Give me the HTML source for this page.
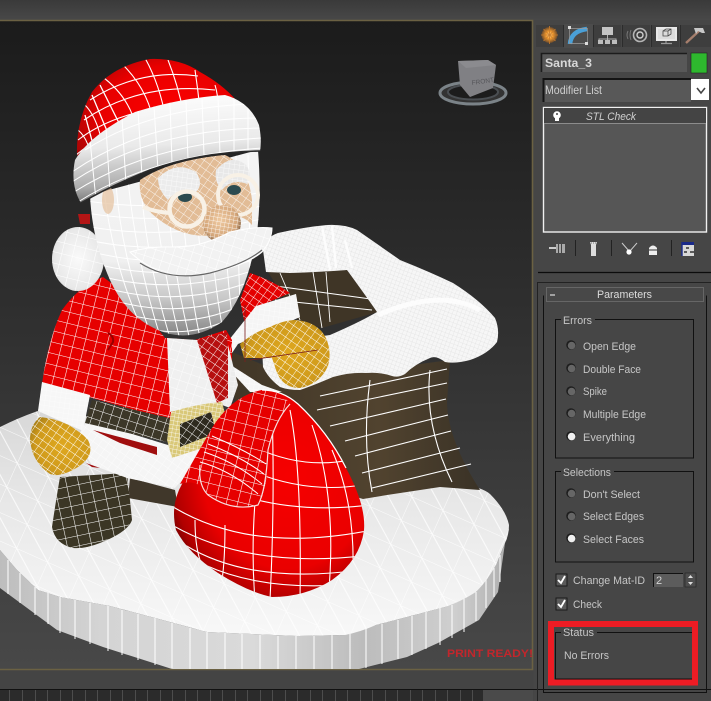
<!DOCTYPE html>
<html><head><meta charset="utf-8"><title>STL Check</title>
<style>
html,body{margin:0;padding:0;background:#444;width:711px;height:701px;overflow:hidden}
svg{display:block}
text{font-family:"Liberation Sans",sans-serif;font-size:11px;fill:#c6c6c6}
</style></head><body>
<svg width="711" height="701" viewBox="0 0 711 701" xmlns="http://www.w3.org/2000/svg">
<defs>
<linearGradient id="vp" x1="0" y1="0" x2="0" y2="1"><stop offset="0" stop-color="#1b1b1b"/><stop offset=".45" stop-color="#2f2f2f"/><stop offset="1" stop-color="#484848"/></linearGradient>
<linearGradient id="top" x1="0" y1="0" x2="0" y2="1"><stop offset="0" stop-color="#3a3a3a"/><stop offset="1" stop-color="#484848"/></linearGradient>
<linearGradient id="side" x1="0" y1="0" x2="1" y2="0"><stop offset="0" stop-color="#bdbdbd"/><stop offset=".2" stop-color="#d4d4d4"/><stop offset=".5" stop-color="#dadada"/><stop offset=".72" stop-color="#bcbcbc"/><stop offset=".9" stop-color="#cfcfcf"/><stop offset="1" stop-color="#b0b0b0"/></linearGradient>
<linearGradient id="brim" x1="0" y1="0" x2=".1" y2="1"><stop offset="0" stop-color="#ffffff"/><stop offset=".5" stop-color="#eaeaea"/><stop offset=".85" stop-color="#adadad"/><stop offset="1" stop-color="#777"/></linearGradient>
<radialGradient id="hat" cx=".6" cy=".5" r=".75"><stop offset="0" stop-color="#ff0000"/><stop offset=".6" stop-color="#e80000"/><stop offset="1" stop-color="#8a0808"/></radialGradient>
<radialGradient id="bag" cx=".6" cy=".42" r=".68"><stop offset="0" stop-color="#f60000"/><stop offset=".65" stop-color="#ea0000"/><stop offset=".88" stop-color="#b00000"/><stop offset="1" stop-color="#600000"/></radialGradient>
<linearGradient id="head" x1="0" y1="0" x2="0" y2="1"><stop offset="0" stop-color="#f4f4f4"/><stop offset=".6" stop-color="#f0f0f0"/><stop offset=".8" stop-color="#c8c8c8"/><stop offset="1" stop-color="#858585"/></linearGradient>
<radialGradient id="gold" cx=".55" cy=".5" r=".65"><stop offset="0" stop-color="#dfa81e"/><stop offset=".7" stop-color="#cf9a1c"/><stop offset="1" stop-color="#a07a18"/></radialGradient>
<radialGradient id="pom" cx=".5" cy=".5" r=".62"><stop offset="0" stop-color="#fafafa"/><stop offset=".75" stop-color="#e8e8e8"/><stop offset="1" stop-color="#c4c4c4"/></radialGradient>
<radialGradient id="nose" cx=".45" cy=".4" r=".6"><stop offset="0" stop-color="#efc9a0"/><stop offset=".75" stop-color="#d4a67a"/><stop offset="1" stop-color="#7d5c3e"/></radialGradient>
<linearGradient id="brown" x1="0" y1="0" x2="1" y2="0"><stop offset="0" stop-color="#403627"/><stop offset=".6" stop-color="#51432f"/><stop offset="1" stop-color="#3a3226"/></linearGradient>
<linearGradient id="snow" x1="0" y1="0" x2="0" y2="1"><stop offset="0" stop-color="#d6d6d6"/><stop offset=".45" stop-color="#e8e8e8"/><stop offset="1" stop-color="#f8f8f8"/></linearGradient>
<radialGradient id="sun" cx=".5" cy=".5" r=".5"><stop offset="0" stop-color="#ffe0a0"/><stop offset=".45" stop-color="#f29a2e"/><stop offset="1" stop-color="#6b4a2c"/></radialGradient>
<pattern id="g11" width="11" height="11" patternUnits="userSpaceOnUse" patternTransform="rotate(14)"><path d="M0 0H11M0 0V11" stroke="#fff" stroke-width="1.1" fill="none"/></pattern>
<pattern id="g11b" width="12" height="10" patternUnits="userSpaceOnUse" patternTransform="rotate(-12)"><path d="M0 0H12M0 0V10" stroke="#fff" stroke-width="1.1" fill="none"/></pattern>
<pattern id="g9" width="9" height="9" patternUnits="userSpaceOnUse" patternTransform="rotate(18)"><path d="M0 0H9M0 0V9" stroke="#fff" stroke-width="1" fill="none"/></pattern>
<pattern id="g7" width="7" height="7" patternUnits="userSpaceOnUse" patternTransform="rotate(35)"><path d="M0 0H7M0 0V7" stroke="#fff" stroke-width=".9" fill="none"/></pattern>
<pattern id="g4" width="4" height="4" patternUnits="userSpaceOnUse" patternTransform="rotate(20)"><path d="M0 0H4M0 0V4" stroke="#cfcfcf" stroke-width=".5" fill="none"/></pattern>
<pattern id="g5" width="5" height="5" patternUnits="userSpaceOnUse" patternTransform="rotate(8)"><path d="M0 0H5M0 0V5" stroke="#fff" stroke-width=".9" fill="none"/></pattern>
<pattern id="g5y" width="4" height="4" patternUnits="userSpaceOnUse" patternTransform="rotate(10)"><path d="M0 0H4M0 0V4" stroke="#fff" stroke-width=".7" fill="none"/></pattern>
<pattern id="snowm" width="34" height="26" patternUnits="userSpaceOnUse" patternTransform="rotate(24)"><path d="M0 0H34M0 0V26M0 0L34 26" stroke="#fff" stroke-width="1" fill="none"/></pattern>
<clipPath id="cBag"><path id="bagP" d="M262,390 Q282,390 298,404 Q328,432 346,468 Q366,505 364,530 Q360,560 332,580 Q305,597 272,597 Q248,592 218,573 Q188,553 176,530 Q170,505 182,484 Q198,456 212,428 Q232,396 262,390Z"/></clipPath>
<clipPath id="cHead"><path d="M90,195 L258,150 Q262,200 256,240 Q246,296 222,322 Q190,344 158,330 Q126,316 110,280 Q92,240 90,195Z"/></clipPath>
<clipPath id="cHat"><path d="M150,59 Q180,58 200,72 Q222,84 236,100 L200,130 L100,180 L77,155 Q76,120 92,92 Q112,66 150,59Z"/></clipPath>
<clipPath id="cBrim"><path d="M75,160 Q90,135 135,112 Q180,98 225,95 Q250,102 259,125 Q262,140 260,151 Q200,152 150,170 Q110,186 81,203 Q70,185 75,160Z"/></clipPath>
<clipPath id="cPom"><ellipse cx="78" cy="259" rx="26" ry="32"/></clipPath>
</defs>

<!-- chrome -->
<rect width="711" height="701" fill="#444"/>
<rect width="711" height="20" fill="url(#top)"/>
<rect x="0" y="20" width="532" height="650" fill="url(#vp)"/>
<path d="M0,20.5H532.5V669.5H0" fill="none" stroke="#6b6143" stroke-width="1.6"/>
<rect x="533.5" y="20" width="178" height="681" fill="#464646"/>

<!-- base side -->
<path d="M0,550 L17,570 L38,590 L60,597 L110,606 L207,632 L297,636 L345,635 L376,625 L445,607 L476,592 L497,563 L505,543 L498,592 L479,620 L438,643 L407,657 L359,669 L172,669 L103,647 L57,630 L0,588Z" fill="url(#side)"/>
<path d="M8,560V594M20,573V603M35,587V615M48,593V624M60,597V633M75,600V639M90,603V644M108,606V651M122,610V655M138,614V660M155,618V665M172,623V668M190,628V669M207,632V669M225,633V669M242,634V669M260,635V669M278,636V669M296,636V669M314,636V669M332,635V669M350,634V669M366,628V668M382,624V664M398,620V659M412,616V655M426,612V649M440,608V645M452,605V638M464,598V632M476,592V621M486,579V608M494,568V597M500,555V582" stroke="#fff" stroke-width="1"/>
<!-- snow top -->
<path d="M0,427 Q18,418 35,412 L70,400 L140,470 L360,490 Q420,484 465,487 Q480,486 490,494 Q506,510 509,525 Q509,535 505,543 Q500,555 497,563 Q488,580 476,592 Q460,602 445,607 L376,625 Q360,632 345,635 L297,636 L207,632 Q155,618 110,606 L60,597 L38,590 L17,570 L0,550Z" fill="url(#snow)"/>
<path d="M0,427 Q18,418 35,412 L70,400 L140,470 L360,490 Q420,484 465,487 Q480,486 490,494 Q506,510 509,525 Q509,535 505,543 Q500,555 497,563 Q488,580 476,592 Q460,602 445,607 L376,625 Q360,632 345,635 L297,636 L207,632 Q155,618 110,606 L60,597 L38,590 L17,570 L0,550Z" fill="url(#snowm)" opacity=".85"/>

<!-- chimney -->
<path d="M227,350 L300,380 L450,360 L447,403 Q448,440 480,490 L440,487 L387,495 L363,499 L300,480 L240,430Z" fill="url(#brown)"/>
<path d="M317,410L447,383M330,426L446,399M345,441L448,415M355,456L451,431M362,473L460,448M372,488L471,464M320,396L447,369M370,380Q362,440 372,492M430,370Q424,425 452,482" stroke="#fff" stroke-width="1.1" fill="none"/>
<path d="M130,478L175,490L178,507L128,498Z" fill="#40372a"/>
<path d="M268,272 L347,270 L378,312 L322,328 L298,320Z" fill="#3f3526"/>
<path d="M280,273L300,320M313,272L322,328M326,272L330,322M268,285L378,300M275,300L372,310" stroke="#fff" stroke-width=".9" fill="none"/>
<!-- rim -->
<path d="M263,250 Q264,238 278,233 Q305,227 327,225 Q345,224 357,230 Q380,246 400,260 Q430,272 453,283 Q480,300 495,318 Q500,330 497,342 Q488,354 470,360 Q455,364 445,362 Q436,355 430,358 Q415,364 405,374 Q398,378 392,376 Q380,372 367,373 Q350,372 333,377 Q312,386 300,390 Q288,390 280,387 Q268,378 263,367 L262,345 L330,335 Q360,322 377,312 Q366,296 347,270 Q320,272 290,273 L266,272Z" fill="#f6f6f6"/>
<path d="M263,250 Q264,238 278,233 Q305,227 327,225 Q345,224 357,230 Q380,246 400,260 Q430,272 453,283 Q480,300 495,318 Q500,330 497,342 Q488,354 470,360 Q455,364 445,362 Q436,355 430,358 Q415,364 405,374 Q398,378 392,376 Q380,372 367,373 Q350,372 333,377 Q312,386 300,390 Q288,390 280,387 Q268,378 263,367 L262,345 L330,335 Q360,322 377,312 Q366,296 347,270 Q320,272 290,273 L266,272Z" fill="url(#g4)" opacity=".75"/>
<path d="M322,226L330,270M332,226L336,268M345,240L352,268" stroke="#fff" stroke-width="2.4" fill="none" opacity=".8"/>
<path d="M378,315Q440,288 480,310" stroke="#fff" stroke-width="5" fill="none" opacity=".8"/>

<!-- right arm behind -->
<path d="M250,273 Q272,280 290,293 L257,307 L245,325 L240,300Z" fill="#e40000"/>
<path d="M250,273 Q272,280 290,293 L257,307 L245,325 L240,300Z" fill="url(#g7)"/>
<path d="M256,306 L296,294 L300,317 L262,334 L238,344 L226,362 L262,385 L282,392 L250,392 L228,368 L225,345Z" fill="#f5f5f5"/>
<path d="M256,306 L296,294 L300,317 L262,334 L238,344 L226,362 L262,385 L282,392 L250,392 L228,368 L225,345Z" fill="url(#g5)" opacity=".6"/>

<!-- boot -->
<path d="M60,477 L127,473 Q130,500 132,520 Q128,532 100,543 Q85,549 73,548 Q55,544 52,527 Q56,500 60,477Z" fill="#3b3625"/>
<path d="M60,477 L127,473 Q130,500 132,520 Q128,532 100,543 Q85,549 73,548 Q55,544 52,527 Q56,500 60,477Z" fill="url(#g11b)"/>

<!-- torso -->
<path d="M42,384 Q48,340 62,310 Q80,285 103,277 L135,300 L165,338 L195,340 L226,330 L232,340 L232,380 L227,400 L170,420 L92,398Z" fill="#e60000"/>
<path d="M42,384 Q48,340 62,310 Q80,285 103,277 L135,300 L165,338 L195,340 L226,330 L232,340 L232,380 L227,400 L170,420 L92,398Z" fill="url(#g11)"/>
<path d="M197,340 L227,332 L230,400 L217,403Z" fill="#b60f0f"/>
<path d="M197,340 L227,332 L230,400 L217,403Z" fill="url(#g7)"/>
<path d="M108,333 Q114,336 113,342 L108,350" fill="none" stroke="#900" stroke-width="2"/>
<!-- white placket -->
<path d="M167,338 L197,340 L217,403 L170,412Z" fill="#f0f0f0"/>
<path d="M167,338 L197,340 L217,403 L170,412Z" fill="url(#g9)" opacity=".8"/>
<path d="M228,345 L238,385 L230,408 L217,403 L228,398Z" fill="#ececec"/>
<path d="M228,345 L238,385 L230,408 L217,403 L228,398Z" fill="url(#g5)" opacity=".5"/>
<!-- lower fur -->
<path d="M87,420 L168,445 L225,425 L232,432 L200,460 L175,488 L127,478 L92,465 L76,440Z" fill="#f5f5f5"/>
<path d="M87,420 L168,445 L225,425 L232,432 L200,460 L175,488 L127,478 L92,465 L76,440Z" fill="url(#g7)" opacity=".7"/>
<path d="M93,430 L157,447 L157,455 L120,443 Z" fill="#a00f0f"/>
<path d="M86,463 L100,468 L92,467Z" fill="#a00f0f"/>
<!-- belt -->
<path d="M92,400 L170,418 L167,442 L85,423Z" fill="#3c3728"/>
<path d="M92,400 L170,418 L167,442 L85,423Z" fill="url(#g9)"/>
<!-- buckle -->
<path d="M171,412 Q196,404 222,402 L226,418 L218,444 Q195,450 172,458 L167,440Z" fill="#d9c878"/>
<path d="M171,412 Q196,404 222,402 L226,418 L218,444 Q195,450 172,458 L167,440Z" fill="url(#g5y)"/>
<path d="M180,424 L211,412 L216,433 L180,447Z" fill="#2e2a1e"/>
<path d="M180,424 L211,412 L216,433 L180,447Z" fill="url(#g7)"/>
<!-- cuff left -->
<path d="M42,382 L90,395 L83,431 L38,411Z" fill="#f7f7f7"/>
<path d="M42,382 L90,395 L83,431 L38,411Z" fill="url(#g5)" opacity=".5"/>
<!-- left mitten -->
<path d="M40,417 Q70,420 88,440 Q96,455 78,467 Q60,478 50,474 Q32,462 30,440 Q30,425 40,417Z" fill="url(#gold)"/>
<path d="M40,417 Q70,420 88,440 Q96,455 78,467 Q60,478 50,474 Q32,462 30,440 Q30,425 40,417Z" fill="url(#g7)"/>
<!-- right mitten -->
<path d="M240,344 Q254,332 270,327 Q284,320 296,320 Q318,322 326,338 Q332,352 328,366 Q320,384 300,388 Q282,388 276,370 L272,358 L244,358Z" fill="url(#gold)"/>
<path d="M240,344 Q254,332 270,327 Q284,320 296,320 Q318,322 326,338 Q332,352 328,366 Q320,384 300,388 Q282,388 276,370 L272,358 L244,358Z" fill="url(#g7)"/>
<path d="M250,360 L318,350M245,305L245,362" stroke="#7a1f1f" stroke-width=".8" fill="none"/>

<!-- pompom -->
<ellipse cx="78" cy="259" rx="26" ry="32" fill="url(#pom)"/>
<g clip-path="url(#cPom)"><rect x="50" y="225" width="60" height="70" fill="url(#g11)"/></g>
<path d="M78,214h12v10h-10Z" fill="#b31515"/>

<!-- head/beard -->
<path d="M90,195 L258,150 Q262,200 256,240 Q246,296 222,322 Q190,344 158,330 Q126,316 110,280 Q92,240 90,195Z" fill="url(#head)"/>
<g clip-path="url(#cHead)" fill="none" stroke="#fff" stroke-width="1">
<path d="M80,200Q170,215 270,190M80,212Q170,228 270,204M85,226Q170,242 265,218M88,240Q170,258 265,232M92,252Q170,272 262,246M96,264Q175,284 260,258M100,276Q175,296 255,270M106,288Q178,308 250,282M112,300Q180,320 245,294M120,312Q182,332 240,306M130,324Q184,342 232,318"/>
<path d="M104,190Q112,260 140,325M116,185Q122,260 150,332M128,180Q136,260 160,336M140,176Q146,260 170,338M152,172Q160,260 180,340M166,170Q170,260 190,340M180,166Q184,260 200,338M194,164Q198,260 212,332M208,160Q210,260 222,325M222,158Q224,250 232,316M236,155Q238,250 240,305M248,155Q250,230 250,290"/>
</g>
<!-- skin -->
<path d="M140,180 Q170,160 225,155 Q248,165 252,200 L252,225 Q235,205 215,235 Q180,240 150,212 Q138,198 140,180Z" fill="#e2bc96"/>
<path d="M140,180 Q170,160 225,155 Q248,165 252,200 L252,225 Q235,205 215,235 Q180,240 150,212 Q138,198 140,180Z" fill="url(#g7)" opacity=".85"/>
<path d="M158,178 Q176,160 196,172 Q204,184 196,192 Q180,186 168,200 Q158,190 158,178Z" fill="#ececec"/>
<path d="M158,178 Q176,160 196,172 Q204,184 196,192 Q180,186 168,200 Q158,190 158,178Z" fill="url(#g5)" opacity=".7"/>
<path d="M216,170 Q232,152 247,166 Q252,176 247,184 Q232,178 222,190 Q214,182 216,170Z" fill="#e8e8e8"/>
<path d="M216,170 Q232,152 247,166 Q252,176 247,184 Q232,178 222,190 Q214,182 216,170Z" fill="url(#g5)" opacity=".7"/>
<ellipse cx="108" cy="200" rx="6" ry="14" fill="#e6c29e" opacity=".7"/>
<!-- eyes -->
<ellipse cx="185" cy="197" rx="7" ry="5" fill="#2c4b50"/>
<ellipse cx="234" cy="190" rx="7" ry="5" fill="#2c4b50"/>
<!-- glasses -->
<circle cx="187" cy="209" r="17.5" fill="none" stroke="#f8f1e6" stroke-width="4.5"/>
<circle cx="238" cy="195" r="20" fill="none" stroke="#f8f1e6" stroke-width="4"/>
<path d="M170,213 Q155,212 143,207" fill="none" stroke="#f8f1e6" stroke-width="4"/>
<!-- nose -->
<circle cx="222" cy="224" r="19" fill="url(#nose)"/>
<circle cx="222" cy="224" r="19" fill="url(#g5y)"/>
<!-- moustache -->
<path d="M130,252 Q150,246 173,247 Q200,248 230,232 Q255,226 272,228 Q272,240 262,252 Q246,266 207,273 Q180,280 160,272 Q140,262 130,252Z" fill="#f2f2f2" stroke="#fff"/>
<path d="M130,252 Q150,246 173,247 Q200,248 230,232 Q255,226 272,228 Q272,240 262,252 Q246,266 207,273 Q180,280 160,272 Q140,262 130,252Z" fill="url(#g9)"/>
<path d="M140,263 Q170,282 210,273 Q245,264 262,250" fill="none" stroke="#666" stroke-width="1.2"/>

<!-- hat -->
<path d="M150,59 Q180,58 200,72 Q222,84 236,100 L200,130 L100,180 L77,155 Q76,120 92,92 Q112,66 150,59Z" fill="url(#hat)"/>
<g clip-path="url(#cHat)" fill="none" stroke="#fff" stroke-width="1.1">
<path d="M100,75Q135,100 138,140M120,62Q150,90 155,130M145,58Q160,85 166,120M168,60Q178,85 184,115M195,70Q198,90 200,110M215,85Q218,95 218,105M85,105Q100,120 105,160M78,130Q90,140 92,165"/>
<path d="M90,100Q140,68 198,76M84,120Q140,82 215,90M78,140Q130,100 235,104M76,155Q120,118 200,115"/>
<path d="M92,95L115,150M85,115L100,170M100,85L125,135" stroke-width="1.3"/>
</g>
<!-- brim -->
<path d="M75,160 Q90,135 135,112 Q180,98 225,95 Q250,102 259,125 Q262,140 260,151 Q200,152 150,170 Q110,186 81,203 Q70,185 75,160Z" fill="url(#brim)"/>
<g clip-path="url(#cBrim)" fill="none" stroke="#fff" stroke-width="1">
<path d="M72,172Q150,118 262,118M72,182Q150,130 262,128M74,192Q150,144 262,138M78,202Q150,156 262,148M85,150Q150,108 250,104"/>
<path d="M90,140L96,200M106,128L110,192M122,118L126,184M138,110L142,176M154,106L158,170M170,102L172,164M186,100L188,160M202,98L204,156M218,96L220,154M234,98L234,152M248,104L248,150"/>
</g>
<path d="M81,203 Q110,186 150,170 Q200,152 260,151" fill="none" stroke="#2a2a2a" stroke-width="1.6"/>

<!-- bag -->
<use href="#bagP" fill="url(#bag)"/>
<g clip-path="url(#cBag)" fill="none" stroke="#fff" stroke-width="1.1">
<path d="M250,445Q300,470 350,460M238,465Q300,495 362,485M225,490Q290,515 370,505M170,505Q250,555 372,530M172,525Q250,570 370,555M185,545Q250,585 360,570M205,565Q260,590 340,585"/>
<path d="M290,410Q302,470 300,600M312,425Q338,500 328,600M332,450Q358,510 352,590M272,410Q275,500 270,600M258,470Q250,540 255,600M225,525Q225,560 222,580M195,520Q195,545 200,560"/>
</g>
<!-- bag neck -->
<path d="M262,390 Q282,392 290,404 Q275,420 268,450 Q268,490 258,505 Q232,512 208,495 Q198,478 180,484 L212,428 Q232,396 262,390Z" fill="#e60000"/>
<path d="M262,390 Q282,392 290,404 Q275,420 268,450 Q268,490 258,505 Q232,512 208,495 Q198,478 180,484 L212,428 Q232,396 262,390Z" fill="url(#g11)"/>
<path d="M290,404Q275,420 268,450Q266,490 258,505Q232,512 208,495Q198,485 200,465" fill="none" stroke="#f4e0e0" stroke-width="1.2"/>
<path d="M200,462Q230,470 258,494M204,452Q235,462 262,484M208,444Q240,456 264,474M212,436Q245,450 266,464" fill="none" stroke="#fff" stroke-width="1"/>
<path d="M262,390 Q282,390 298,404 Q328,432 346,468" fill="none" stroke="#fff" stroke-width="1.2"/>

<!-- gizmo -->
<ellipse cx="473" cy="93" rx="33" ry="11" fill="#333" stroke="#7b8388" stroke-width="3"/>
<ellipse cx="473" cy="92" rx="25" ry="7.5" fill="#1c1c1c" stroke="#4a4e52" stroke-width="2"/>
<path d="M458,61 L488,60 L496,65 L493,88 L470,97 L460,85Z" fill="#808084"/>
<path d="M458,61 L488,60 L496,65 L466,68Z" fill="#8b8b8f"/>
<text x="472" y="85" transform="rotate(-8 472 85)" style="font-size:6.5px;fill:#55555a">FRONT</text>

<!-- PRINT READY -->
<text x="447" y="657" textLength="86" lengthAdjust="spacingAndGlyphs" style="font-size:11px;font-weight:bold;fill:#c2262c">PRINT READY!</text>

<!-- bottom track -->
<rect x="0" y="689" width="711" height="1" fill="#111"/>
<rect x="0" y="690" width="483" height="11" fill="#2b2b2b"/>
<rect x="483" y="690" width="50" height="11" fill="#4a4a4a"/>
<path d="M9.5,690V701M22.5,690V701M35.5,690V701M47.5,690V701M60.5,690V701M72.5,690V701M85.5,690V701M97.5,690V701M110.5,690V701M122.5,690V701M135.5,690V701M147.5,690V701M160.5,690V701M172.5,690V701M185.5,690V701M197.5,690V701M210.5,690V701M222.5,690V701M235.5,690V701M247.5,690V701M260.5,690V701M272.5,690V701M285.5,690V701M297.5,690V701M310.5,690V701M322.5,690V701M335.5,690V701M347.5,690V701M360.5,690V701M372.5,690V701M385.5,690V701M397.5,690V701M410.5,690V701M422.5,690V701M435.5,690V701M447.5,690V701M460.5,690V701M472.5,690V701" stroke="#4d4d4d" stroke-width="1"/>

<!-- tabs -->
<rect x="536" y="25" width="27" height="22" fill="#3e3e3e"/>
<rect x="564" y="24" width="29" height="24" fill="#4c4c4c"/>
<rect x="594" y="25" width="27" height="22" fill="#3e3e3e"/>
<rect x="623" y="25" width="27" height="22" fill="#3e3e3e"/>
<rect x="652" y="25" width="27" height="22" fill="#3e3e3e"/>
<rect x="681" y="25" width="30" height="22" fill="#3e3e3e"/>
<path d="M563.5,25V47M593.5,25V47M622.5,25V47M651.5,25V47M680.5,25V47" stroke="#2c2c2c"/>
<!-- create -->
<circle cx="549.5" cy="35" r="8" fill="url(#sun)"/><path d="M549.5,26V44M541,35H558M543.5,29L555.5,41M555.5,29L543.5,41" stroke="#c77c2c" stroke-width=".8"/>
<!-- modify -->
<path d="M570,44 Q571,31 587,29" fill="none" stroke="#4aa0d8" stroke-width="4.5"/>
<path d="M570,28.5H587M570,43.5H587M569.5,28V44M587.5,28V44" stroke="#9a9a9a" stroke-width=".7"/>
<rect x="568" y="26" width="3" height="3" fill="#ddd"/><rect x="585" y="42" width="3" height="3" fill="#ddd"/>
<!-- hierarchy -->
<rect x="602" y="27" width="11" height="8" fill="#c4c4c4"/>
<path d="M607.5,35V39M599,42V39H616V42M607.5,39V42" fill="none" stroke="#b0b0b0"/>
<rect x="598" y="40" width="5" height="4" fill="#bdbdbd"/><rect x="605" y="40" width="5" height="4" fill="#bdbdbd"/><rect x="612" y="40" width="5" height="4" fill="#bdbdbd"/>
<!-- motion -->
<circle cx="640" cy="35" r="6.5" fill="none" stroke="#b5b5b5" stroke-width="1.6"/><circle cx="640" cy="35" r="3" fill="none" stroke="#d0d0d0" stroke-width="1.4"/>
<path d="M631,30Q629,35 631,40M628,31Q626,35 628,39" fill="none" stroke="#777" stroke-width="1"/>
<!-- display -->
<rect x="656" y="27" width="21" height="14" fill="#e8e8e8"/><rect x="658" y="29" width="17" height="10" fill="#dcdcdc"/>
<path d="M663,31l3,-2h5v5l-3,2h-5zM663,31h5v5M668,31l3,-2" fill="none" stroke="#4a4a4a" stroke-width=".8"/>
<path d="M666,41V43M661,43.5H672" stroke="#9a9a9a" stroke-width="1.2"/>
<!-- utilities -->
<path d="M686,43L699,31" stroke="#a57e6c" stroke-width="2.4"/>
<path d="M694,28L703,28L705,33L702,33L698,31L696,34Z" fill="#c8c8c8"/>

<!-- name field -->
<rect x="541" y="53" width="146" height="19" fill="#585858"/>
<path d="M541.5,72V53.5H687" fill="none" stroke="#1c1c1c" stroke-width="1.6"/>
<text x="545" y="67" textLength="47" lengthAdjust="spacingAndGlyphs" style="font-size:12px;font-weight:bold;fill:#d8d8d8">Santa_3</text>
<rect x="691" y="53" width="16" height="20" fill="#2eb82e" stroke="#222" stroke-width=".6"/>
<!-- modifier list -->
<rect x="543" y="78" width="148" height="24" fill="#585858"/>
<path d="M543.5,102V79H691" fill="none" stroke="#141414" stroke-width="2"/>
<text x="545" y="94" textLength="57" lengthAdjust="spacingAndGlyphs" style="font-size:12px;fill:#cfcfcf">Modifier List</text>
<rect x="691" y="79" width="18" height="21" fill="#fff"/>
<path d="M697,88L701,93L705,88" fill="none" stroke="#444" stroke-width="1.6"/>
<!-- stack -->
<rect x="543.5" y="107.5" width="163" height="124.5" fill="#565656" stroke="#f0f0f0" stroke-width="1.4"/>
<rect x="544" y="108" width="162" height="15" fill="#444"/>
<path d="M544,123.5H706" stroke="#8c8c8c"/>
<circle cx="557" cy="115" r="3.8" fill="#fff"/><rect x="555" y="118" width="4" height="3" fill="#fff"/><circle cx="557" cy="114" r="1" fill="#444"/>
<text x="586" y="120" textLength="50" lengthAdjust="spacingAndGlyphs" style="font-style:italic;fill:#d0d0d0">STL Check</text>
<!-- stack icons -->
<path d="M549,248H556" stroke="#ccc" stroke-width="2"/><rect x="556" y="244" width="9" height="9" fill="#aaa"/><path d="M558.5,244V253M561.5,244V253" stroke="#444"/>
<path d="M575.5,240V256M611.5,240V256M671.5,240V256" stroke="#222"/>
<path d="M590,242H597L596,245V256H591V245Z" fill="#ddd"/><path d="M591,243H596" stroke="#777" stroke-dasharray="1 1"/>
<path d="M622,243L629,251M637,243L630,251" stroke="#ccc"/><circle cx="629" cy="252" r="2.6" fill="#fff"/>
<path d="M649,248Q653,243 657,248V255H649Z" fill="#eee"/><path d="M649,250H657" stroke="#333"/>
<rect x="682" y="242" width="12" height="14" fill="#d8d8d8"/><rect x="682" y="242" width="12" height="3" fill="#1a2a8a"/><path d="M682,242V256" stroke="#1a2a8a" stroke-width="1.4"/><path d="M686,248h3M690,252h4M684,252h3" stroke="#333" stroke-width="1.6"/>
<!-- separators -->
<path d="M538,272.5H711" stroke="#0c0c0c" stroke-width="1.2"/>
<path d="M537.5,701V282.5H711" fill="none" stroke="#222"/>
<path d="M543.5,692.5V295.5M706.5,295.5V692.5M543,692.5H707" fill="none" stroke="#111"/>
<!-- parameters -->
<rect x="546.5" y="287.5" width="157" height="14" fill="#484848" stroke="#666"/>
<path d="M550,295H555" stroke="#ddd" stroke-width="1.2"/>
<text x="597" y="298" textLength="55" lengthAdjust="spacingAndGlyphs" style="fill:#dcdcdc">Parameters</text>

<!-- errors -->
<rect x="555.5" y="319.5" width="138" height="138.5" fill="none" stroke="#111"/>
<rect x="561" y="314" width="34" height="12" fill="#464646"/>
<text x="563" y="324" textLength="29" lengthAdjust="spacingAndGlyphs">Errors</text>
<g fill="#666">
<circle cx="571" cy="345" r="4.8" fill="#1e1e1e"/><circle cx="571.6" cy="345.6" r="3.8"/>
<circle cx="571" cy="368" r="4.8" fill="#1e1e1e"/><circle cx="571.6" cy="368.6" r="3.8"/>
<circle cx="571" cy="391" r="4.8" fill="#1e1e1e"/><circle cx="571.6" cy="391.6" r="3.8"/>
<circle cx="571" cy="413" r="4.8" fill="#1e1e1e"/><circle cx="571.6" cy="413.6" r="3.8"/>
<circle cx="571" cy="436" r="4.8" fill="#1e1e1e"/><circle cx="571.6" cy="436.6" r="3.8" fill="#f0f0f0"/>
<circle cx="571" cy="493" r="4.8" fill="#1e1e1e"/><circle cx="571.6" cy="493.6" r="3.8"/>
<circle cx="571" cy="516" r="4.8" fill="#1e1e1e"/><circle cx="571.6" cy="516.6" r="3.8"/>
<circle cx="571" cy="538" r="4.8" fill="#1e1e1e"/><circle cx="571.6" cy="538.6" r="3.8" fill="#f0f0f0"/>
</g>
<text x="583" y="350" textLength="53" lengthAdjust="spacingAndGlyphs">Open Edge</text>
<text x="583" y="373" textLength="58" lengthAdjust="spacingAndGlyphs">Double Face</text>
<text x="583" y="395" textLength="24" lengthAdjust="spacingAndGlyphs">Spike</text>
<text x="583" y="418" textLength="63" lengthAdjust="spacingAndGlyphs">Multiple Edge</text>
<text x="583" y="441" textLength="52" lengthAdjust="spacingAndGlyphs">Everything</text>

<!-- selections -->
<rect x="555.5" y="471.5" width="138" height="90.5" fill="none" stroke="#111"/>
<rect x="561" y="466" width="53" height="12" fill="#464646"/>
<text x="563" y="476" textLength="48" lengthAdjust="spacingAndGlyphs">Selections</text>
<text x="583" y="498" textLength="57" lengthAdjust="spacingAndGlyphs">Don't Select</text>
<text x="583" y="520" textLength="61" lengthAdjust="spacingAndGlyphs">Select Edges</text>
<text x="583" y="543" textLength="61" lengthAdjust="spacingAndGlyphs">Select Faces</text>

<!-- checks -->
<rect x="556" y="574" width="11" height="12" fill="#5a5a5a" stroke="#1a1a1a"/>
<path d="M558,580L561,583L565,576" fill="none" stroke="#fff" stroke-width="1.8"/>
<text x="573" y="584" textLength="72" lengthAdjust="spacingAndGlyphs">Change Mat-ID</text>
<rect x="653" y="573" width="30" height="14" fill="#5c5c5c"/>
<path d="M653.5,587V573.5H683" fill="none" stroke="#111"/>
<text x="656" y="584" style="fill:#d4d4d4">2</text>
<rect x="685" y="573" width="11" height="14" fill="#4e4e4e" stroke="#222" stroke-width=".6"/>
<path d="M690.5,575L693,578H688ZM690.5,585L693,582H688Z" fill="#ddd"/>
<rect x="556" y="598" width="11" height="12" fill="#5a5a5a" stroke="#1a1a1a"/>
<path d="M558,604L561,607L565,600" fill="none" stroke="#fff" stroke-width="1.8"/>
<text x="573" y="608" textLength="29" lengthAdjust="spacingAndGlyphs">Check</text>

<!-- status -->
<rect x="555.5" y="632.5" width="138" height="46.5" fill="none" stroke="#111"/>
<rect x="561" y="626" width="36" height="12" fill="#464646"/>
<text x="563" y="636" textLength="31" lengthAdjust="spacingAndGlyphs">Status</text>
<text x="564" y="659" textLength="45" lengthAdjust="spacingAndGlyphs">No Errors</text>
<rect x="551" y="624" width="144" height="58.5" fill="none" stroke="#ed1c24" stroke-width="6"/>
</svg>
</body></html>
